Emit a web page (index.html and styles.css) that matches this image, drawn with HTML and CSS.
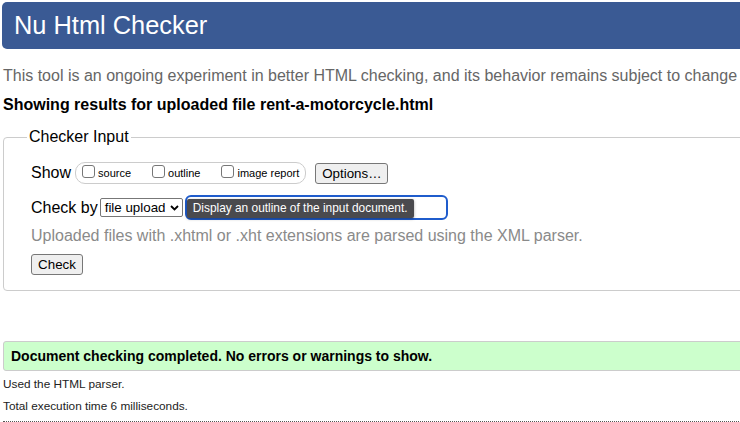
FILE: index.html
```html
<!DOCTYPE html>
<html lang="en">
<head>
<meta charset="utf-8">
<title>Nu Html Checker</title>
<link rel="stylesheet" href="styles.css">
</head>
<body>
<div class="page">
  <h1 class="header">Nu Html Checker</h1>
  <p class="intro">This tool is an ongoing experiment in better HTML checking, and its behavior remains subject to change</p>
  <p class="showing">Showing results for uploaded file rent-a-motorcycle.html</p>

  <fieldset class="checker">
    <legend>Checker Input</legend>
    <div class="row row-show">
      <span class="label">Show</span>
      <span class="group">
        <label class="opt"><input type="checkbox" class="box"><span>source</span></label>
        <label class="opt"><input type="checkbox" class="box"><span>outline</span></label>
        <label class="opt last"><input type="checkbox" class="box"><span>image report</span></label>
      </span>
      <button class="btn btn-options" type="button">Options…</button>
    </div>
    <div class="row row-by">
      <span class="label">Check by</span>
      <span class="select">file upload
        <svg class="chev" width="9" height="6" viewBox="0 0 9 6"><path d="M1 1 L4.5 4.5 L8 1" fill="none" stroke="#000" stroke-width="1.8"/></svg>
      </span>
      <span class="file-field">
        <span class="tooltip">Display an outline of the input document.</span>
      </span>
    </div>
    <p class="note">Uploaded files with .xhtml or .xht extensions are parsed using the XML parser.</p>
    <div class="row row-check">
      <button class="btn btn-check" type="button">Check</button>
    </div>
  </fieldset>

  <div class="success">Document checking completed. No errors or warnings to show.</div>
  <p class="meta">Used the HTML parser.</p>
  <p class="meta meta-time">Total execution time 6 milliseconds.</p>
  <hr class="dots">
</div>
</body>
</html>
```
FILE: styles.css
```css
html, body {
  margin: 0;
  padding: 0;
  overflow: hidden;
  background: #fff;
}
body {
  font-family: "Liberation Sans", Arial, sans-serif;
  color: #000;
}
.page {
  width: 1000px;
  padding: 2px 0 0 3px;
}
.header {
  margin: 0 0 0 -1px;
  height: 47px;
  background: #3a5a94;
  border-radius: 5px;
  color: #fff;
  font-weight: normal;
  font-size: 25.4px;
  line-height: 47px;
  padding-left: 12px;
}
.intro {
  margin: 18px 0 0;
  font-size: 16px;
  line-height: 18px;
  color: #666;
  white-space: nowrap;
}
.showing {
  margin: 11px 0 0;
  font-size: 16px;
  line-height: 18px;
  font-weight: bold;
  white-space: nowrap;
}
.checker {
  margin: 14px 0 0;
  border: 1px solid #ccc;
  border-radius: 4px;
  padding: 16px 0 15px 27px;
}
.checker legend {
  margin-left: -4px;
  padding: 0 2px;
  font-size: 16px;
  line-height: 18px;
}
.row {
  display: flex;
  align-items: center;
}
.label {
  font-size: 16px;
  line-height: 18px;
}
.row-show {
  height: 22px;
}
.group {
  display: flex;
  align-items: center;
  margin-left: 4px;
  height: 20px;
  border: 1px solid #ccc;
  border-radius: 10px;
  padding: 0 6px;
}
.opt {
  display: flex;
  align-items: center;
  font-size: 11px;
  margin-right: 21px;
}
.opt.last {
  margin-right: 0;
}
.box {
  appearance: none;
  -webkit-appearance: none;
  width: 13px;
  height: 13px;
  margin: 0 3px 3px 0;
  border: 1px solid #777;
  border-radius: 3px;
  background: #fff;
  box-sizing: border-box;
}
.btn {
  font-family: "Liberation Sans", Arial, sans-serif;
  font-size: 13.33px;
  background: #efefef;
  border: 1px solid #777;
  border-radius: 3px;
  color: #000;
  padding: 0 6px;
  height: 21px;
  line-height: 19px;
}
.btn-options {
  margin-left: 9px;
  width: 73px;
}
.row-by {
  margin-top: 11px;
  height: 25px;
}
.select {
  display: flex;
  align-items: center;
  margin-left: 2px;
  height: 19px;
  box-sizing: border-box;
  width: 83px;
  border: 1px solid #777;
  border-radius: 2px;
  padding-left: 4px;
  font-size: 13.33px;
}
.chev {
  margin-left: 5px;
}
.file-field {
  display: flex;
  align-items: center;
  margin-left: 2px;
  width: 263px;
  height: 25px;
  box-sizing: border-box;
  border: 2px solid #1f5ccc;
  border-radius: 6px;
  position: relative;
}
.tooltip {
  position: absolute;
  left: 0;
  top: 2px;
  height: 19px;
  line-height: 19px;
  padding: 0 6px;
  background: #4a4a4e;
  color: #fff;
  font-size: 11.9px;
  border-radius: 2px;
  box-shadow: 0 1px 3px rgba(0,0,0,0.35);
  white-space: nowrap;
}
.note {
  margin: 7px 0 0;
  font-size: 16px;
  line-height: 18px;
  color: #8a8a8a;
  white-space: nowrap;
}
.row-check {
  margin-top: 9px;
}
.btn-check {
  width: 52px;
  padding: 0;
}
.success {
  margin-top: 50px;
  height: 28px;
  line-height: 28px;
  background: #ccffcc;
  border: 1px solid #ccc;
  border-radius: 3px;
  padding-left: 7px;
  font-size: 14px;
  font-weight: bold;
}
.meta {
  margin: 6px 0 0;
  font-size: 11.8px;
  line-height: 15px;
  color: #222;
}
.meta-time {
  margin-top: 7px;
}
.dots {
  margin: 7px 0 0;
  border: 0;
  border-top: 1px dotted #555;
  height: 0;
}
```
